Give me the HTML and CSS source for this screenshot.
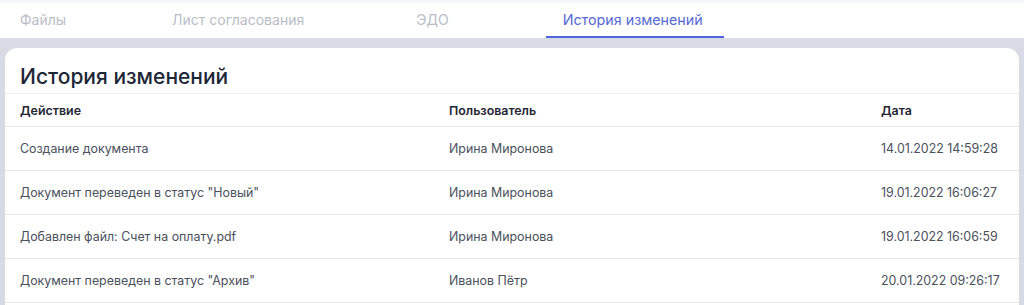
FILE: index.html
```html
<!DOCTYPE html>
<html lang="ru">
<head>
<meta charset="utf-8">
<link rel="stylesheet" href="styles.css">
</head>
<body>
<nav class="tabs">
  <div class="tab tab-files">Файлы</div>
  <div class="tab tab-list">Лист согласования</div>
  <div class="tab tab-edo">ЭДО</div>
  <div class="tab tab-history active">История изменений</div>
</nav>
<main class="page">
  <section class="card">
    <h1 class="card-title">История изменений</h1>
    <div class="table">
      <div class="row head">
        <div>Действие</div>
        <div>Пользователь</div>
        <div>Дата</div>
      </div>
      <div class="row">
        <div>Создание документа</div>
        <div>Ирина Миронова</div>
        <div>14.01.2022 14:59:28</div>
      </div>
      <div class="row">
        <div>Документ переведен в статус "Новый"</div>
        <div>Ирина Миронова</div>
        <div>19.01.2022 16:06:27</div>
      </div>
      <div class="row">
        <div>Добавлен файл: Счет на оплату.pdf</div>
        <div>Ирина Миронова</div>
        <div>19.01.2022 16:06:59</div>
      </div>
      <div class="row">
        <div>Документ переведен в статус "Архив"</div>
        <div>Иванов Пётр</div>
        <div>20.01.2022 09:26:17</div>
      </div>
    </div>
  </section>
</main>
</body>
</html>
```

FILE: styles.css
```css
* { box-sizing: border-box; }
html, body {
  margin: 0;
  padding: 0;
  font-family: Inter, "Noto Sans", sans-serif;
  background: #d8dbe6;
  overflow: hidden;
}
.tabs {
  display: flex;
  height: 38px;
  background: linear-gradient(#f3f4f6 0, #ffffff 6px);
  padding-left: 3px;
}
.tab {
  padding: 0 17px;
  height: 38px;
  line-height: 40px;
  font-size: 14px;
  color: #b9bdc7;
  border-bottom: 2px solid transparent;
  white-space: nowrap;
}
.tab-list { margin-left: 72px; }
.tab-edo { margin-left: 78px; }
.tab-history {
  margin-left: 80px;
  padding-right: 21px;
  font-size: 14.3px;
}
.tab.active {
  color: #5669d6;
  border-bottom-color: #4f63db;
}
.page {
  padding: 10px 5px 0 5px;
}
.card {
  background: #ffffff;
  border-radius: 12px 12px 0 0;
  height: 300px;
}
.card-title {
  margin: 0;
  padding: 15px 15px 0 15px;
  height: 46px;
  line-height: 28px;
  font-size: 21px;
  font-weight: 500;
  color: #1d2636;
  border-bottom: 1px solid #eceef2;
}
.row {
  display: grid;
  grid-template-columns: 429px 432px 1fr;
  padding-left: 15px;
  height: 44px;
  align-items: center;
  font-size: 12.4px;
  color: #4a505c;
  border-bottom: 1px solid #e6e8ed;
}
.row.head {
  height: 33px;
  font-weight: 600;
  color: #1f2633;
}
```
